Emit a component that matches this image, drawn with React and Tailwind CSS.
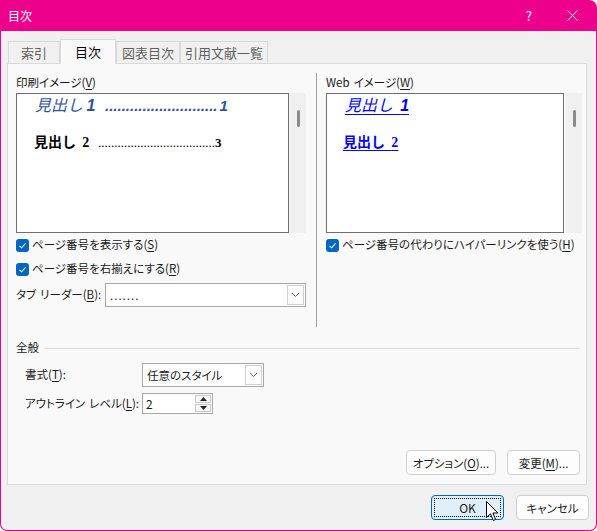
import React from "react";

const font = "font-['Noto_Sans_CJK_JP','Noto_Sans',sans-serif]";
const palt = "[font-feature-settings:'palt']";

const Check = () => (
  <span className="w-[13px] h-[13px] rounded-[3px] bg-[#0067c0] flex items-center justify-center shrink-0">
    <svg width="9" height="9" viewBox="0 0 9 9">
      <path d="M1.5 4.8 L3.6 6.8 L7.6 2.4" fill="none" stroke="white" strokeWidth="1.1" />
    </svg>
  </span>
);

const Chevron = () => (
  <svg width="9" height="6" viewBox="0 0 9 6">
    <path d="M1 1 L4.5 4.5 L8 1" fill="none" stroke="#606060" strokeWidth="1" />
  </svg>
);

const Combo = ({ w, h, children }) => (
  <div className={`${w} ${h} bg-white border border-[#a8a8a8] flex items-stretch`}>
    <div className="flex-1 flex items-center pl-[4px] leading-[16px] whitespace-nowrap">{children}</div>
    <div className="w-[17px] m-[1px] border border-[#d0d0d0] bg-[#fdfdfd] flex items-center justify-center">
      <Chevron />
    </div>
  </div>
);

const Scroll = () => (
  <div className="w-[16px] h-[140px] bg-[#f0f0f0] flex justify-center">
    <div className="w-[3px] h-[17px] mt-[17px] rounded-full bg-[#8a8a8a]" />
  </div>
);

const Btn = ({ w, children, focus }) => (
  <div
    className={`${w} h-[25px] rounded-[4px] border flex items-center justify-center leading-[16px] whitespace-nowrap ${
      focus ? "bg-[#e0eef9] border-[#0067c0] p-[2px]" : "bg-[#fdfdfd] border-[#d0d0d0]"
    }`}
  >
    {focus ? (
      <div className="w-full h-full border border-dotted border-black flex items-center justify-center">
        {children}
      </div>
    ) : (
      children
    )}
  </div>
);

const Tab = ({ w, children, active }) =>
  active ? (
    <div
      className={`${w} h-[25px] -mb-px relative z-10 bg-[#f9f9f9] border border-b-0 border-[#d9d9d9] flex items-center justify-center text-[13px] text-black`}
    >
      {children}
    </div>
  ) : (
    <div
      className={`${w} h-[22px] border border-b-0 border-[#d9d9d9] flex items-center justify-center text-[13px] text-[#606060]`}
    >
      {children}
    </div>
  );

const U = ({ children }) => <span className="underline underline-offset-2">{children}</span>;

export default function App() {
  return (
    <div className={`relative w-[597px] h-[531px] bg-[#ec008c] rounded-tr-[8px] rounded-b-[7px] flex flex-col overflow-hidden text-[#1a1a1a] ${font}`}>
      <div className="h-[31px] flex items-center pl-[8px] text-white text-[12px] shrink-0">
        <span>目次</span>
        <span className="ml-auto mr-[35px] text-[13px]">?</span>
        <svg className="mr-[19px]" width="11" height="11" viewBox="0 0 11 11">
          <path d="M0.5 0.5 L10.5 10.5 M10.5 0.5 L0.5 10.5" stroke="white" strokeWidth="1" />
        </svg>
      </div>

      <div className="flex-1 mx-[1px] mb-[1px] bg-[#f0f0f0] rounded-b-[6px] flex flex-col text-[11.5px]">
        <div className="flex items-end pl-[7px] mt-[8px] h-[24px]">
          <Tab w="w-[52px]">索引</Tab>
          <Tab w="w-[56px]" active>目次</Tab>
          <Tab w="w-[64px]">図表目次</Tab>
          <Tab w="w-[88px]">引用文献一覧</Tab>
        </div>

        <div className={`ml-[6px] w-[580px] h-[422px] bg-[#f9f9f9] border border-[#d9d9d9] flex flex-col ${palt}`}>
          <div className="flex h-[271px] pt-[9px] pl-[8px]">
            <div className="w-[290px] flex flex-col">
              <div className="h-[18px] leading-[18px]">
                印刷イメージ(<U>V</U>)
              </div>
              <div className="flex mt-[2px]">
                <div className="w-[273px] h-[140px] bg-white border border-[#6f6f6f] flex flex-col [font-feature-settings:normal]">
                  <div className="flex items-baseline h-[20px] pl-[18px] text-[#2f5597] italic text-[16px] leading-[20px] whitespace-nowrap">
                    <span className="w-[70px] shrink-0">
                      見出し <span className="font-['Liberation_Sans'] font-bold">1</span>
                    </span>
                    <span className="font-['Liberation_Sans'] font-bold text-[15px]">
                      ...........................
                    </span>
                    <span className="font-['Liberation_Sans'] font-bold text-[15px] ml-[2px]">1</span>
                  </div>
                  <div className="flex items-baseline h-[16px] mt-[19px] pl-[17px] font-bold text-[14px] leading-[16px] text-black whitespace-nowrap">
                    <span className="w-[64px] shrink-0">
                      見出し&nbsp;&nbsp;<span className="font-['Liberation_Serif']">2</span>
                    </span>
                    <span className="font-['Liberation_Serif'] font-normal text-[13px]">
                      ....................................
                    </span>
                    <span className="font-['Liberation_Serif'] text-[13px]">3</span>
                  </div>
                </div>
                <div className="ml-[1px]">
                  <Scroll />
                </div>
              </div>
              <div className="h-[18px] mt-[3px] flex items-center gap-[3px] whitespace-nowrap">
                <Check />
                <span>
                  ページ番号を表示する(<U>S</U>)
                </span>
              </div>
              <div className="h-[18px] mt-[6px] flex items-center gap-[3px] whitespace-nowrap">
                <Check />
                <span>
                  ページ番号を右揃えにする(<U>R</U>)
                </span>
              </div>
              <div className="flex items-center mt-[5px]">
                <span className="w-[89px] whitespace-nowrap">
                  タブ<span className="ml-[4px]">リーダー(<U>B</U>):</span>
                </span>
                <Combo w="w-[201px]" h="h-[24px]">
                  <span className="tracking-[1px]">.......</span>
                </Combo>
              </div>
            </div>

            <div className="w-px bg-[#a0a0a0] ml-[10px] mb-[8px]" />

            <div className="ml-[9px] w-[256px] flex flex-col">
              <div className="h-[18px] leading-[18px] whitespace-nowrap">
                Web<span className="ml-[4px]">イメージ(<U>W</U>)</span>
              </div>
              <div className="flex mt-[2px]">
                <div className="w-[238px] h-[140px] bg-white border border-[#6f6f6f] flex flex-col [font-feature-settings:normal]">
                  <div className="h-[20px] pl-[18px] text-[#0000ff] italic text-[16px] leading-[20px] whitespace-nowrap">
                    <span className="underline underline-offset-[3px]">
                      見出し&nbsp;&nbsp;<span className="font-['Liberation_Sans'] font-bold">1</span>
                    </span>
                  </div>
                  <div className="h-[16px] mt-[19px] pl-[16px] font-bold text-[14px] leading-[16px] text-[#0000ff] whitespace-nowrap">
                    <span className="underline underline-offset-[3px]">
                      見出し&nbsp;&nbsp;<span className="font-['Liberation_Serif']">2</span>
                    </span>
                  </div>
                </div>
                <div className="ml-[2px]">
                  <Scroll />
                </div>
              </div>
              <div className="h-[18px] mt-[3px] flex items-center gap-[3px] whitespace-nowrap">
                <Check />
                <span>
                  ページ番号の代わりにハイパーリンクを使う(<U>H</U>)
                </span>
              </div>
            </div>
          </div>

          <div className="flex items-center h-[18px] mt-[4px] pl-[8px] pr-[6px]">
            <span>全般</span>
            <div className="flex-1 h-px bg-[#dcdcdc] ml-[5px]" />
          </div>

          <div className="flex items-center mt-[6px] pl-[17px]">
            <span className="w-[117px] whitespace-nowrap">
              書式(<U>T</U>):
            </span>
            <Combo w="w-[122px]" h="h-[24px]">任意のスタイル</Combo>
          </div>

          <div className="flex items-center mt-[6px] pl-[17px]">
            <span className="w-[117px] whitespace-nowrap">
              アウトライン<span className="ml-[4px]">レベル(<U>L</U>):</span>
            </span>
            <div className="w-[71px] h-[21px] bg-white border border-[#a8a8a8] flex">
              <div className="flex-1 flex items-center pl-[3px] text-[12px]">2</div>
              <div className="w-[16px] flex flex-col m-[1px] gap-px">
                <div className="flex-1 border border-[#c8c8c8] bg-[#f6f6f6] flex items-center justify-center">
                  <svg width="7" height="4" viewBox="0 0 7 4"><path d="M0 4 L3.5 0 L7 4Z" fill="#222" /></svg>
                </div>
                <div className="flex-1 border border-[#c8c8c8] bg-[#f6f6f6] flex items-center justify-center">
                  <svg width="7" height="4" viewBox="0 0 7 4"><path d="M0 0 L3.5 4 L7 0Z" fill="#222" /></svg>
                </div>
              </div>
            </div>
          </div>

          <div className="mt-auto mb-[9px] flex justify-end gap-[11px] pr-[6px]">
            <Btn w="w-[90px]">
              <span>
                オプション(<U>O</U>)...
              </span>
            </Btn>
            <Btn w="w-[73px]">
              <span>
                変更(<U>M</U>)...
              </span>
            </Btn>
          </div>
        </div>

        <div className={`flex justify-end gap-[12px] mt-[10px] pr-[7px] ${palt}`}>
          <Btn w="w-[73px]" focus>
            <span className="text-[12px]">OK</span>
          </Btn>
          <Btn w="w-[73px]">キャンセル</Btn>
        </div>
      </div>

      <svg className="absolute left-[486px] top-[501px]" width="13" height="21" viewBox="0 0 13 21">
        <path d="M0.5 0.5 L0.5 16.5 L4.5 12.8 L7.3 19.5 L9.6 18.5 L6.9 12 L12 12 Z" fill="white" stroke="black" strokeWidth="1" strokeLinejoin="round" />
      </svg>
    </div>
  );
}
